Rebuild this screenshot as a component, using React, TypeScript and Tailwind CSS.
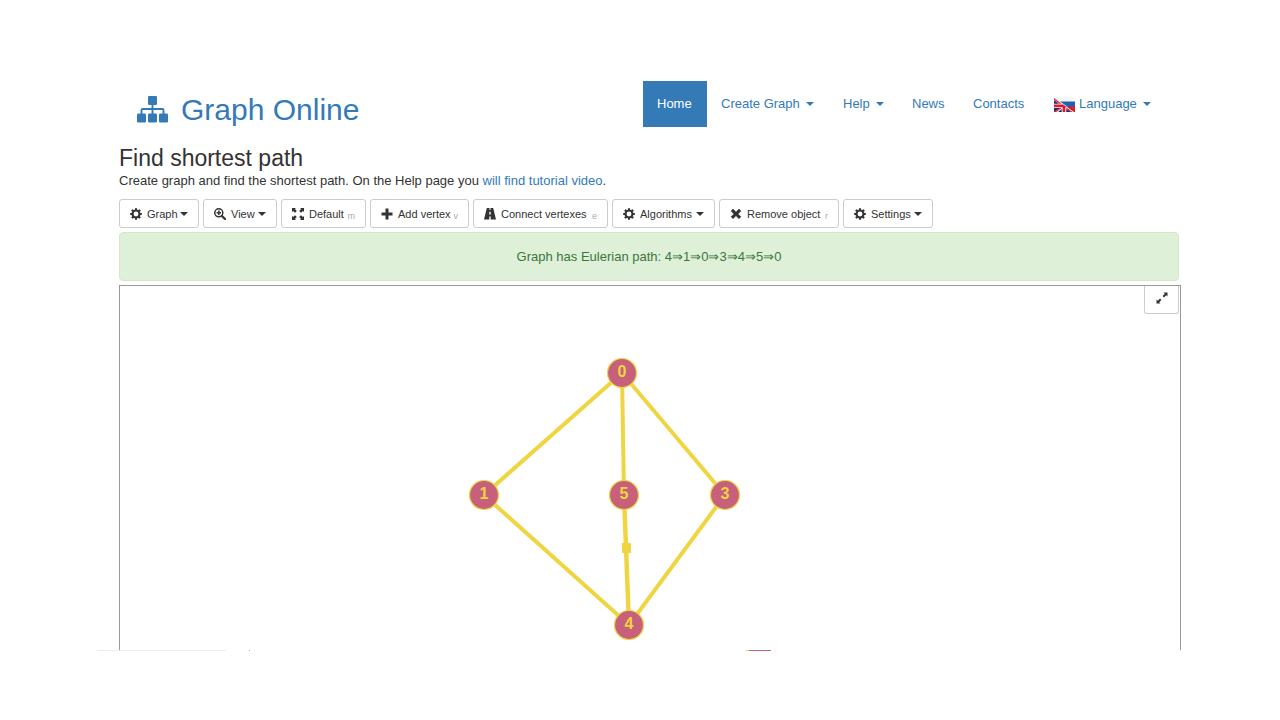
import type { ReactNode } from "react";

type IconName = "cog" | "zoom" | "fullscreen" | "plus" | "road" | "remove";

function Icon({ name }: { name: IconName }) {
  return (
    <svg viewBox="0 0 12 12" className="h-3 w-3 shrink-0 fill-current" aria-hidden="true">
      {name === "cog" && (
        <>
          <circle cx="6" cy="6" r="3.4" fill="none" stroke="currentColor" strokeWidth="1.9" />
          <path d="M5 .2h2l.3 2.200H4.700zM5 11.800h2l.3-2.200H4.700zM.2 5v2l2.200.3V4.700zM11.800 5v2l-2.200.3V4.700zM1.200 2.600 2.600 1.200l1.700 1.100-2 2zM10.800 2.600 9.400 1.200 7.700 2.300l2 2zM1.200 9.400l1.400 1.400 1.700-1.100-2-2zM10.800 9.400l-1.400 1.400-1.700-1.100 2-2z" />
        </>
      )}
      {name === "zoom" && (
        <>
          <circle cx="4.800" cy="4.800" r="4" fill="none" stroke="currentColor" strokeWidth="1.500" />
          <path d="M4.100 2.600h1.500v1.500H7v1.500H5.600V7H4.100V5.600H2.600V4.100h1.500z" />
          <path d="M8 8l3 3" fill="none" stroke="currentColor" strokeWidth="2.200" strokeLinecap="round" />
        </>
      )}
      {name === "fullscreen" && (
        <path d="M0 0h4L2.900 1.100 4.800 3 3 4.800 1.100 2.900 0 4zM12 0v4l-1.100-1.100L9 4.800 7.200 3l1.900-1.900L8 0zM0 12V8l1.100 1.100L3 7.200 4.800 9l-1.900 1.900L4 12zM12 12H8l1.100-1.100L7.200 9 9 7.200l1.900 1.900L12 8z" />
      )}
      {name === "plus" && <path d="M4.500 .5h3v4h4v3h-4v4h-3v-4h-4v-3h4z" />}
      {name === "road" && (
        <path d="M2.800 0h2.700v2h1V0h2.700L12 11.500H6.700V8.500H5.300v3H0zM5.400 3.700 5.200 6.500h1.600L6.600 3.700z" fillRule="evenodd" />
      )}
      {name === "remove" && (
        <path d="M3 .8 6 3.700 9 .8 11.200 3 8.300 5.900l2.900 2.900L9 11 6 8.100 3 11 .8 8.800l2.900-2.900L.8 3z" />
      )}
    </svg>
  );
}

function Caret() {
  return (
    <svg viewBox="0 0 8 4" className="h-1 w-2 shrink-0 fill-current" aria-hidden="true">
      <path d="M0 0h8L4 4z" />
    </svg>
  );
}

function Logo() {
  return (
    <svg viewBox="0 0 31 27" className="h-[27px] w-[31px] fill-current" aria-hidden="true">
      <rect x="11" y="0" width="9" height="9" rx="1.200" />
      <rect x="0" y="17.500" width="9" height="9" rx="1.200" />
      <rect x="11" y="17.500" width="9" height="9" rx="1.200" />
      <rect x="22" y="17.500" width="9" height="9" rx="1.200" />
      <path d="M15.500 8v10M4.500 18v-4q0-1 1-1h20q1 0 1 1v4" fill="none" stroke="currentColor" strokeWidth="1.900" />
    </svg>
  );
}

function Flag() {
  return (
    <svg viewBox="0 0 21 15" className="h-[15px] w-[21px]" aria-hidden="true">
      <path d="M1 0h20v5H7z" fill="#f6f6f6" />
      <path d="M6 4.500h15V10h-7z" fill="#1b62b0" />
      <path d="M12 9.500h9V15h-2z" fill="#e31b23" />
      <path d="M0 1 20 15H0z" fill="#26286b" />
      <path d="M0 1 20 15h-3L0 3.200zM0 15l7.500-5 1.500 1L4 15z" fill="#fff" />
      <path d="M0 1.300 18.500 15H17L0 2.800zM0 15l7-4.800.8.800L2.200 15z" fill="#d8192b" />
      <path d="M0 6.800h8l6 4.200H0zM7.700 7l4.600 3v5H7.700z" fill="#fff" />
      <path d="M0 7.600h9l4 2.700H0zM8.600 7.500l2.700 2V15H8.600z" fill="#e0182a" />
    </svg>
  );
}

function NavItem({ children, width, active = false }: { children: ReactNode; width: string; active?: boolean }) {
  return (
    <li className={width}>
      <a
        href="#"
        className={`flex h-[46px] items-center px-3.5 text-[13px] leading-5 whitespace-nowrap ${
          active ? "bg-[#337ab7] text-white" : "text-[#337ab7]"
        }`}
      >
        {children}
      </a>
    </li>
  );
}

interface Tool {
  icon: IconName;
  label: string;
  width: string;
  hotkey?: string;
}

const tools: Tool[] = [
  { icon: "cog", label: "Graph", width: "w-20" },
  { icon: "zoom", label: "View", width: "w-[74px]" },
  { icon: "fullscreen", label: "Default", width: "w-[85px]", hotkey: "m" },
  { icon: "plus", label: "Add vertex", width: "w-[99px]", hotkey: "v" },
  { icon: "road", label: "Connect vertexes", width: "w-[135px]", hotkey: "e" },
  { icon: "cog", label: "Algorithms", width: "w-[103px]" },
  { icon: "remove", label: "Remove object", width: "w-[120px]", hotkey: "r" },
  { icon: "cog", label: "Settings", width: "w-[90px]" },
];

const vertices = [
  { id: "0", x: 502, y: 87 },
  { id: "1", x: 364, y: 209 },
  { id: "5", x: 504, y: 209 },
  { id: "3", x: 605, y: 209 },
  { id: "4", x: 509, y: 339 },
];

export default function App() {
  return (
    <div className="bg-white pt-[81px] pr-[99px] pl-[119px] font-['Liberation_Sans',Arial,sans-serif] text-[#333]">
      <header className="flex items-start justify-between pr-4 pl-[18px]">
        <a href="#" className="flex items-start gap-[13px] pt-[15px] text-[#337ab7]">
          <Logo />
          <span className="text-[30px] leading-7">Graph Online</span>
        </a>
        <nav>
          <ul className="flex">
            <NavItem width="w-16" active>Home</NavItem>
            <NavItem width="w-[122px]">
              <span className="mr-1.5">Create Graph</span>
              <Caret />
            </NavItem>
            <NavItem width="w-[69px]">
              <span className="mr-1.5">Help</span>
              <Caret />
            </NavItem>
            <NavItem width="w-[61px]">News</NavItem>
            <NavItem width="w-[81px]">Contacts</NavItem>
            <NavItem width="w-[125px]">
              <Flag />
              <span className="mr-1.5 ml-1">Language</span>
              <Caret />
            </NavItem>
          </ul>
        </nav>
      </header>

      <main>
        <h1 className="mt-[19px] text-[23px] leading-[25px]">Find shortest path</h1>
        <p className="text-[13px] leading-5">
          Create graph and find the shortest path. On the Help page you{" "}
          <a href="#" className="text-[#337ab7]">will find tutorial video</a>.
        </p>

        <div className="mt-2 flex flex-wrap gap-1">
          {tools.map((tool) => (
            <button
              key={tool.label}
              type="button"
              className={`flex h-[29px] items-center justify-between rounded-[3px] border border-[#ccc] px-2.5 text-[11px] leading-4 whitespace-nowrap ${tool.width}`}
            >
              <span className="flex items-center gap-[5px]">
                <Icon name={tool.icon} />
                {tool.label}
              </span>
              {tool.hotkey ? (
                <sub className="bottom-0 pt-1.5 text-[9px] leading-none text-[#aaa]">{tool.hotkey}</sub>
              ) : (
                <Caret />
              )}
            </button>
          ))}
        </div>

        <div
          role="status"
          className="mt-1 mr-0.5 flex h-[49px] items-center justify-center rounded border border-[#d6e9c6] bg-[#dff0d8] text-[13px] leading-5 text-[#3c763d]"
        >
          Graph has Eulerian path: 4⇒1⇒0⇒3⇒4⇒5⇒0
        </div>

        <section className="relative mt-1 border border-b-0 border-[#999]" aria-label="Graph canvas">
          <svg className="block h-[364px] w-full" role="img" aria-label="Graph">
            <g stroke="#f0d543" strokeWidth="4">
              <path d="M502 87 364 209M502 87l2 122M502 87l103 122M364 209l145 130M605 209l-96 130" fill="none" />
              <path d="M504 209l5 130" strokeWidth="4.500" />
            </g>
            <rect x="502" y="257" width="9" height="10" fill="#f0d543" />
            {vertices.map((v) => (
              <g key={v.id}>
                <circle cx={v.x} cy={v.y} r="14.500" fill="#c7607a" stroke="#f0d543" strokeWidth="1.200" />
                <text x={v.x} y={v.y + 4} textAnchor="middle" className="fill-[#f0d543] text-[16px] font-bold">
                  {v.id}
                </text>
              </g>
            ))}
          </svg>
          <button
            type="button"
            aria-label="Fullscreen"
            className="absolute top-0 right-px flex h-7 w-[35px] items-center justify-center rounded-b-[3px] border border-t-0 border-[#ccc] bg-white pb-1"
          >
            <svg viewBox="0 0 12 12" className="h-3 w-3 fill-current" aria-hidden="true">
              <path d="M7.500 .5h4v4l-1.300-1.300-2.200 2.200-1.400-1.400 2.200-2.200zM.5 7.500l1.300 1.300L4 6.600 5.400 8l-2.200 2.200 1.300 1.300h-4z" />
            </svg>
          </button>
        </section>
        <div className="-ml-[22px] flex h-px" aria-hidden="true">
          <span className="w-[129px] bg-[#eee]" />
          <span className="ml-[23px] w-px bg-[#aaa]" />
          <span className="ml-[496px] w-[3px] bg-[#f0d543]" />
          <span className="w-[22px] bg-[#c7607a]" />
        </div>
      </main>
    </div>
  );
}
